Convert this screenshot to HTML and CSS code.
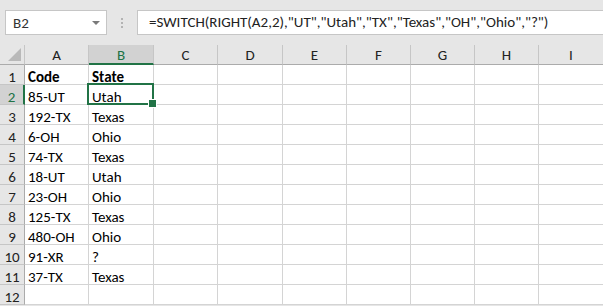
FILE: index.html
```html
<!DOCTYPE html>
<html>
<head>
    <link rel="stylesheet" href="styles.css">
</head>
<body>
    <div class="topbar">
        <div class="namebox">
            <span>B2</span>
            <svg class="drop" width="8" height="5" viewBox="0 0 8 5"><path d="M0 0H8L4 4Z" fill="#7a7a7a"/></svg>
        </div>
        <div class="grip">
            <i></i><i></i><i></i>
        </div>
        <div class="formula">=SWITCH(RIGHT(A2,2),"UT","Utah","TX","Texas","OH","Ohio","?")</div>
    </div>

    <div class="sheet" id="sheet">
        <div class="hd corner">
            <svg width="13" height="13" viewBox="0 0 13 13"><path d="M13 0V13H0Z" fill="#b9b9b9"/></svg>
        </div>
        <div class="hd col">A</div>
        <div class="hd col sel-col">B</div>
        <div class="hd col">C</div>
        <div class="hd col">D</div>
        <div class="hd col">E</div>
        <div class="hd col">F</div>
        <div class="hd col">G</div>
        <div class="hd col">H</div>
        <div class="hd col last">I</div>
    </div>

    <script>
        const rows = [
            ['Code', 'State'],
            ['85-UT', 'Utah'],
            ['192-TX', 'Texas'],
            ['6-OH', 'Ohio'],
            ['74-TX', 'Texas'],
            ['18-UT', 'Utah'],
            ['23-OH', 'Ohio'],
            ['125-TX', 'Texas'],
            ['480-OH', 'Ohio'],
            ['91-XR', '?'],
            ['37-TX', 'Texas'],
            ['', '']
        ];

        const sheet = document.getElementById('sheet');
        let html = '';
        rows.forEach((r, i) => {
            const n = i + 1;
            html += `<div class="hd row${n === 2 ? ' sel-row' : ''}">${n}</div>`;
            html += `<div class="cell${n === 1 ? ' bold' : ''}">${r[0]}</div>`;
            html += `<div class="cell${n === 1 ? ' bold' : ''}${n === 2 ? ' active' : ''}">${r[1]}</div>`;
            for (let c = 0; c < 7; c++) {
                html += `<div class="cell${c === 6 ? ' last' : ''}"></div>`;
            }
        });
        sheet.insertAdjacentHTML('beforeend', html);
    </script>
</body>
</html>
```

FILE: styles.css
```css
* {
    box-sizing: border-box;
}

body {
    margin: 0;
    width: 603px;
    height: 306px;
    overflow: hidden;
    background: #e6e6e6;
    font-family: Carlito, Lato, "Open Sans", sans-serif;
    font-size: 15px;
    color: #000;
}

.topbar {
    display: flex;
    align-items: center;
    height: 45px;
    padding: 10px 0 10px 5px;
}

.namebox {
    display: flex;
    align-items: center;
    justify-content: space-between;
    width: 102px;
    height: 25px;
    background: #fff;
    border: 1px solid #c6c6c6;
    padding: 0 6px 0 7px;
    color: #333;
}

.drop {
    margin-top: 1px;
}

.grip {
    display: flex;
    flex-direction: column;
    gap: 2px;
    width: 30px;
    align-items: center;
}

.grip i {
    width: 2px;
    height: 2px;
    background: #b3b3b3;
}

.formula {
    flex: 1;
    height: 25px;
    line-height: 23px;
    background: #fff;
    border: 1px solid #c6c6c6;
    border-right: none;
    padding-left: 11px;
    white-space: nowrap;
    overflow: hidden;
    color: #222;
}

.sheet {
    display: grid;
    grid-template-columns: 25px 64px 65px 64px 65px 64px 64px 64px 64px 1fr;
    grid-auto-rows: 20px;
    background: #fff;
}

.hd {
    background: #e6e6e6;
    border-right: 1px solid #c6c6c6;
    border-bottom: 1px solid #ababab;
    display: flex;
    align-items: center;
    justify-content: center;
    color: #222;
    padding-top: 1px;
}

.corner {
    align-items: flex-end;
    justify-content: flex-end;
    padding: 0 3px 3px 0;
}

.col.last {
    border-right: none;
}

.sel-col {
    background: #d2d2d2;
    color: #217346;
    border-bottom: 2px solid #217346;
}

.row {
    border-bottom: 1px solid #c6c6c6;
    border-right: 1px solid #ababab;
    padding-top: 4px;
}

.sel-row {
    background: #d2d2d2;
    color: #217346;
    border-right: 2px solid #217346;
}

.cell {
    border-right: 1px solid #d4d4d4;
    border-bottom: 1px solid #d4d4d4;
    padding: 4px 3px 0;
    line-height: 16px;
    white-space: nowrap;
}

.cell.last {
    border-right: none;
}

.bold {
    font-weight: bold;
}

.active {
    position: relative;
}

.active::before {
    content: "";
    position: absolute;
    left: -2px;
    top: -2px;
    right: -1px;
    bottom: -1px;
    border: 2px solid #217346;
}

.active::after {
    content: "";
    position: absolute;
    right: -4px;
    bottom: -4px;
    width: 7px;
    height: 7px;
    background: #217346;
    border: 1px solid #fff;
}
```
